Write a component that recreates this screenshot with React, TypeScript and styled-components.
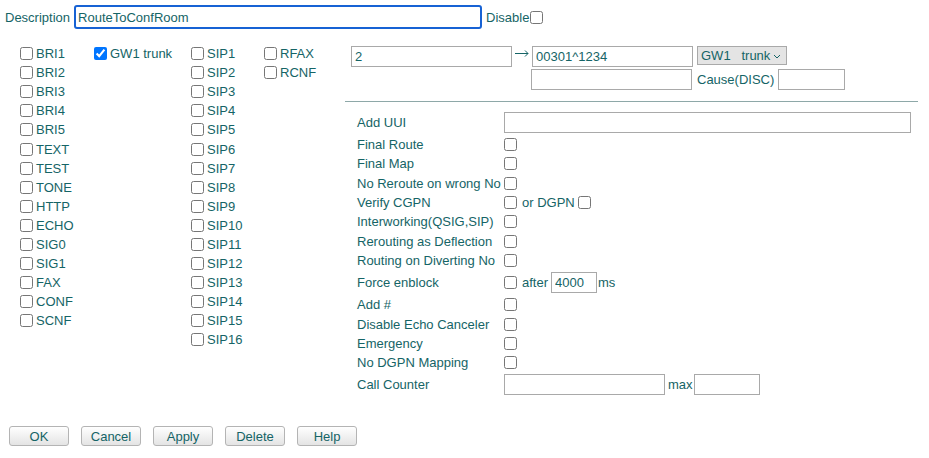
import React from 'react'
import styled, { createGlobalStyle } from 'styled-components'

const TEXT = '#156466'

const GlobalStyle = createGlobalStyle`
  html, body {
    margin: 0;
    padding: 0;
    background: #fff;
  }
  body {
    font-family: 'Liberation Sans', Arial, sans-serif;
    font-size: 13px;
    color: ${TEXT};
  }
`

const leftColumns = [
  ['BRI1', 'BRI2', 'BRI3', 'BRI4', 'BRI5', 'TEXT', 'TEST', 'TONE', 'HTTP', 'ECHO', 'SIG0', 'SIG1', 'FAX', 'CONF', 'SCNF'],
  ['GW1 trunk'],
  Array.from({ length: 16 }, (_, i) => `SIP${i + 1}`),
  ['RFAX', 'RCNF']
]

const colWidths = [74, 97, 73, 80]

const flagRows = ['Final Route', 'Final Map', 'No Reroute on wrong No']
const flagRows2 = ['Interworking(QSIG,SIP)', 'Rerouting as Deflection', 'Routing on Diverting No']
const flagRows3 = ['Add #', 'Disable Echo Canceler', 'Emergency', 'No DGPN Mapping']

export default function App() {
  return (
    <Page>
      <GlobalStyle />
      <TopRow>
        <span>Description</span>
        <DescInput defaultValue="RouteToConfRoom" />
        <DisableLabel>Disable</DisableLabel>
        <Check type="checkbox" />
      </TopRow>

      <Main>
        <Interfaces>
          {leftColumns.map((col, ci) => (
            <IfColumn key={ci} width={colWidths[ci]}>
              {col.map(name => (
                <IfItem key={name}>
                  <Check type="checkbox" defaultChecked={name === 'GW1 trunk'} />
                  <span>{name}</span>
                </IfItem>
              ))}
            </IfColumn>
          ))}
        </Interfaces>

        <Settings>
          <MapRow>
            <TextInput width={161} defaultValue="2" />
            <Arrow width="20" height="9" viewBox="0 0 20 9">
              <path d="M3 4.5h13M13 1.5l3 3-3 3" fill="none" stroke={TEXT} strokeWidth="1" />
            </Arrow>
            <TextInput width={161} defaultValue="00301^1234" />
            <SelectWrap>
              <Select defaultValue="gw1">
                <option value="gw1">GW1&nbsp;&nbsp;&nbsp;trunk</option>
              </Select>
              <Chevron width="8" height="5" viewBox="0 0 8 5">
                <path d="M1 1l3 3 3-3" fill="none" stroke={TEXT} strokeWidth="1" />
              </Chevron>
            </SelectWrap>
          </MapRow>
          <CauseRow>
            <TextInput width={161} />
            <CauseLabel>Cause(DISC)</CauseLabel>
            <TextInput width={67} />
          </CauseRow>

          <Divider />

          <Options>
            <OptRow tall>
              <OptLabel>Add UUI</OptLabel>
              <TextInput width={407} />
            </OptRow>
            {flagRows.map(f => (
              <OptRow key={f}>
                <OptLabel>{f}</OptLabel>
                <Check type="checkbox" />
              </OptRow>
            ))}
            <OptRow>
              <OptLabel>Verify CGPN</OptLabel>
              <Check type="checkbox" />
              <Inline>or DGPN</Inline>
              <Check type="checkbox" />
            </OptRow>
            {flagRows2.map(f => (
              <OptRow key={f}>
                <OptLabel>{f}</OptLabel>
                <Check type="checkbox" />
              </OptRow>
            ))}
            <OptRow tall>
              <OptLabel>Force enblock</OptLabel>
              <Check type="checkbox" />
              <Inline>after</Inline>
              <TextInput width={46} defaultValue="4000" />
              <Inline left={1}>ms</Inline>
            </OptRow>
            {flagRows3.map(f => (
              <OptRow key={f}>
                <OptLabel>{f}</OptLabel>
                <Check type="checkbox" />
              </OptRow>
            ))}
            <OptRow tall>
              <OptLabel>Call Counter</OptLabel>
              <TextInput width={161} />
              <Inline left={3}>max</Inline>
              <TextInput width={66} />
            </OptRow>
          </Options>
        </Settings>
      </Main>

      <Buttons>
        {['OK', 'Cancel', 'Apply', 'Delete', 'Help'].map(b => (
          <Button key={b}>{b}</Button>
        ))}
      </Buttons>
    </Page>
  )
}

const Page = styled.div`
  width: 929px;
  height: 458px;
  display: flex;
  flex-direction: column;
  box-sizing: border-box;
`

const TopRow = styled.div`
  display: flex;
  align-items: center;
  height: 24px;
  margin-top: 5px;
  padding-left: 5px;
`

const DescInput = styled.input`
  box-sizing: border-box;
  width: 408px;
  height: 24px;
  margin-left: 4px;
  border: 2px solid #1762d4;
  border-radius: 3px;
  padding: 0 2px;
  font: 13px 'Liberation Sans', Arial, sans-serif;
  color: ${TEXT};
  outline: none;
`

const DisableLabel = styled.span`
  margin: 0 1px 0 4px;
`

const Check = styled.input`
  width: 13px;
  height: 13px;
  margin: 0;
  flex: none;
`

const Main = styled.div`
  display: flex;
  margin-top: 15px;
`

const Interfaces = styled.div`
  width: 345px;
  padding-left: 20px;
  box-sizing: border-box;
  display: flex;
  align-items: flex-start;
`

const IfColumn = styled.div<{ width: number }>`
  width: ${p => p.width}px;
  display: flex;
  flex-direction: column;
`

const IfItem = styled.label`
  height: 19.1px;
  display: flex;
  align-items: center;
  gap: 3px;
  white-space: nowrap;
`

const Settings = styled.div`
  width: 573px;
  display: flex;
  flex-direction: column;
`

const MapRow = styled.div`
  display: flex;
  align-items: center;
  margin-top: 2px;
  padding-left: 6px;
  height: 21px;
`

const CauseRow = styled.div`
  display: flex;
  align-items: center;
  margin-top: 1px;
  padding-left: 186px;
  height: 22px;
`

const CauseLabel = styled.span`
  margin: 0 4px 0 5px;
`

const Arrow = styled.svg`
  flex: none;
  margin-top: -6px;
`

const TextInput = styled.input<{ width: number }>`
  box-sizing: border-box;
  width: ${p => p.width}px;
  height: 21px;
  border: 1px solid #a9a9a9;
  border-radius: 0;
  padding: 0 3px;
  font: 13px 'Liberation Sans', Arial, sans-serif;
  color: ${TEXT};
  outline: none;
  flex: none;
`

const SelectWrap = styled.div`
  position: relative;
  margin-left: 4px;
  align-self: flex-start;
  height: 19px;
`

const Select = styled.select`
  box-sizing: border-box;
  appearance: none;
  width: 90px;
  height: 19px;
  border: 1px solid #a9a9a9;
  border-radius: 0;
  background: #e4e4e4;
  font: 13px 'Liberation Sans', Arial, sans-serif;
  color: ${TEXT};
  padding: 0 12px 0 3px;
`

const Chevron = styled.svg`
  position: absolute;
  right: 6px;
  top: 8px;
  pointer-events: none;
`

const Divider = styled.div`
  margin-top: 11px;
  height: 0;
  border-top: 1px solid #8ea8a8;
`

const Options = styled.div`
  margin-top: 8px;
  padding-left: 12px;
  display: flex;
  flex-direction: column;
`

const OptRow = styled.div<{ tall?: boolean }>`
  height: ${p => (p.tall ? 25 : 19.3)}px;
  display: flex;
  align-items: center;
  white-space: nowrap;
`

const OptLabel = styled.span`
  width: 147px;
  flex: none;
`

const Inline = styled.span<{ left?: number }>`
  margin: 0 ${p => (p.left === undefined ? 3 : 1)}px 0 ${p => p.left ?? 5}px;
`

const Buttons = styled.div`
  display: flex;
  gap: 12px;
  padding-left: 9px;
  margin-top: 29px;
`

const Button = styled.button`
  width: 60px;
  height: 20px;
  padding: 0;
  border: 1px solid #b4b4b4;
  border-radius: 3px;
  background: linear-gradient(#ffffff, #e4e4e4);
  font: 13px 'Liberation Sans', Arial, sans-serif;
  color: ${TEXT};
`
